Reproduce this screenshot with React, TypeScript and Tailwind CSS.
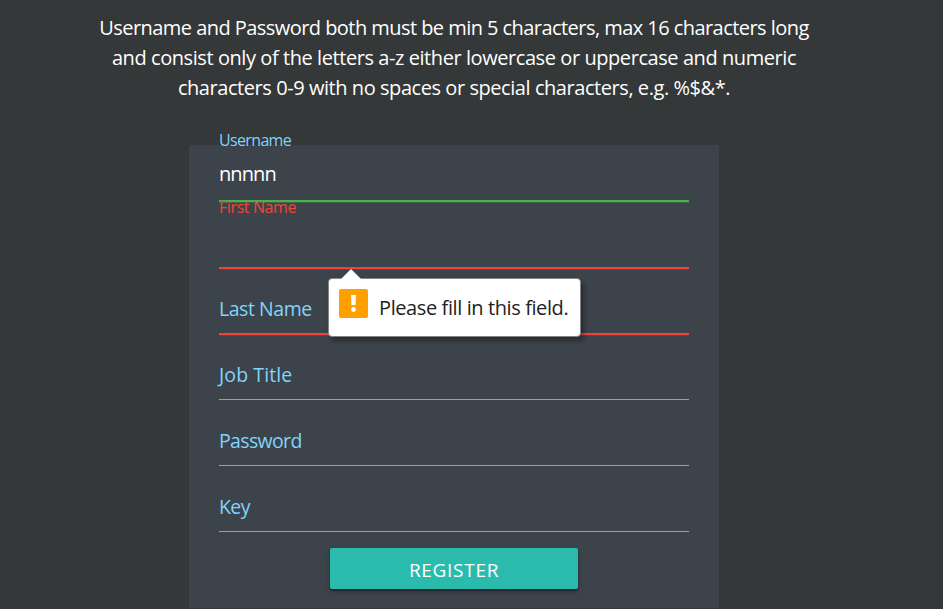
const valid = "border-[#4caf50] shadow-[0_1px_0_0_#4caf50,0_2px_0_0_#4caf5055]";
const invalid = "border-[#f44336] shadow-[0_1px_0_0_#f44336,0_2px_0_0_#f4433633]";
const fields = [
  { label: "Last Name", line: invalid, tracking: "tracking-[-0.45px]" },
  { label: "Job Title", line: "border-[#9e9e9e]", tracking: "tracking-[0.1px]" },
  { label: "Password", line: "border-[#9e9e9e]", tracking: "tracking-[-0.65px]" },
  { label: "Key", line: "border-[#9e9e9e]", tracking: "tracking-[-0.6px]" },
];

function Tooltip() {
  return (
    <div className="absolute top-[77px] left-[109px] z-10 flex h-[59px] w-[253px] rounded-[4px] border border-[#858585] bg-white pt-[10px] pl-[10px] shadow-[3px_4px_5px_rgba(0,0,0,0.35)]">
      <svg className="absolute -top-[11px] left-[11px]" width="22" height="12">
        <path d="M0 12 11 1 22 12Z" fill="white" />
      </svg>
      <svg width="29" height="29" className="shrink-0">
        <rect width="29" height="29" rx="2" fill="#ffa000" />
        <path d="M12 6h5l-.5 10h-4z" fill="white" />
        <circle cx="14.5" cy="20.5" r="2.4" fill="white" />
      </svg>
      <span className="ml-[11px] pt-[4px] text-[20px] leading-[30px] tracking-[-0.4px] whitespace-nowrap text-[#222]">
        Please fill in this field.
      </span>
    </div>
  );
}

export default function App() {
  return (
    <main className="h-[609px] w-[943px] overflow-hidden bg-[#343838] pt-[13px] font-['Open_Sans','Noto_Sans',sans-serif] text-white">
      <p className="w-[908px] text-center text-[20px] leading-[30px] font-normal [font-stretch:95%]">
        <span className="tracking-[-0.55px]">Username and Password both must be min 5 characters, max 16 characters long</span>
        <br />
        <span className="tracking-[-0.43px]">and consist only of the letters a-z either lowercase or uppercase and numeric</span>
        <br />
        <span className="tracking-[-0.44px]">characters 0-9 with no spaces or special characters, e.g. %$&amp;*.</span>
      </p>
      <form className="mt-[42px] ml-[189px] h-[463px] w-[530px] bg-[#3c434b] px-[30px]">
        <div className={`relative h-[56px] border-b pt-[14px] ${valid}`}>
          <label className="absolute -top-[17px] text-[16px] leading-[24px] tracking-[-0.65px] text-[#81d4fa]">Username</label>
          <input
            type="text"
            defaultValue="nnnnn"
            className="block h-[30px] w-full bg-transparent text-[20px] tracking-[-0.9px] outline-none"
          />
        </div>
        <div className={`relative h-[67px] border-b ${invalid}`}>
          <label className="absolute -top-[6px] text-[16px] leading-[24px] tracking-[-0.4px] text-[#f44336]">First Name</label>
          <Tooltip />
        </div>
        {fields.map((f) => (
          <div key={f.label} className={`h-[66px] border-b pt-[26px] ${f.line}`}>
            <label className={`block text-[19.5px] leading-[30px] text-[#81d4fa] ${f.tracking}`}>{f.label}</label>
          </div>
        ))}
        <button
          type="button"
          className="mx-auto mt-4 flex h-[41px] w-[248px] items-center justify-center rounded-[2px] bg-[#2bbbad] pt-[3px] text-[19px] tracking-[0.7px] shadow-[0_2px_2px_rgba(0,0,0,0.3),0_3px_5px_rgba(0,0,0,0.2)]"
        >
          REGISTER
        </button>
      </form>
    </main>
  );
}
